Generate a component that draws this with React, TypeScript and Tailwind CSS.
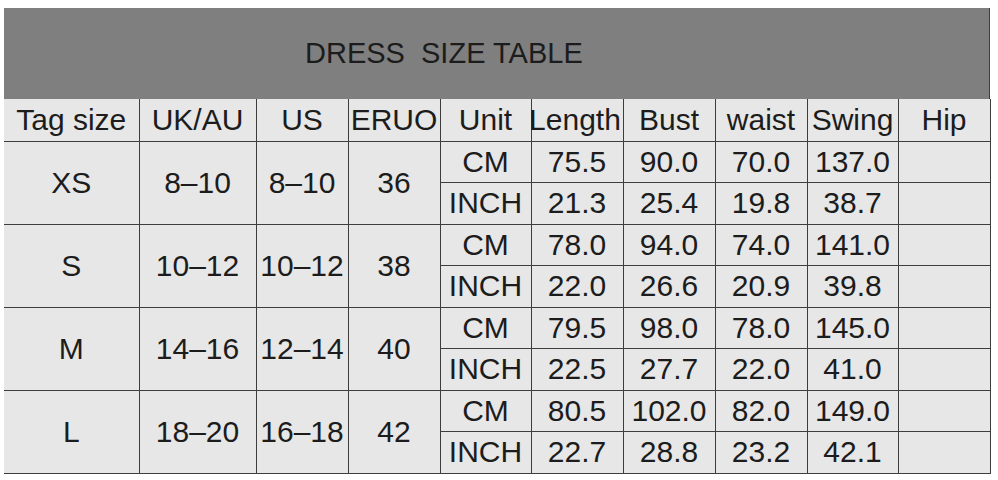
import { Fragment } from "react";

const rows = [
  { tag: "XS", uk: "8–10", us: "8–10", eu: "36", cm: ["75.5", "90.0", "70.0", "137.0"], inch: ["21.3", "25.4", "19.8", "38.7"] },
  { tag: "S", uk: "10–12", us: "10–12", eu: "38", cm: ["78.0", "94.0", "74.0", "141.0"], inch: ["22.0", "26.6", "20.9", "39.8"] },
  { tag: "M", uk: "14–16", us: "12–14", eu: "40", cm: ["79.5", "98.0", "78.0", "145.0"], inch: ["22.5", "27.7", "22.0", "41.0"] },
  { tag: "L", uk: "18–20", us: "16–18", eu: "42", cm: ["80.5", "102.0", "82.0", "149.0"], inch: ["22.7", "28.8", "23.2", "42.1"] },
];

const headers = ["Tag size", "UK/AU", "US", "ERUO", "Unit", "Length", "Bust", "waist", "Swing", "Hip"];
const widths = [135, 117, 92, 92, 91, 92, 92, 92, 91, 92];

const cell = "border border-[#3d3d3d] text-center align-middle p-0 whitespace-nowrap";

export default function App() {
  return (
    <div className="w-[998px] h-[480px] bg-white pt-[8px] pl-[4px] text-[#1c1c1c] font-['Liberation_Sans',Arial,sans-serif] overflow-hidden">
      <div className="w-[986px]">
        <div className="h-[91px] bg-[#7f7f7f] border-r border-[#3d3d3d] flex items-center pl-[301px]">
          <span className="text-[29px] whitespace-pre leading-none">DRESS  SIZE TABLE</span>
        </div>
        <table className="table-fixed border-collapse w-[986px] bg-[#e7e7e7] text-[30px] leading-none">
          <colgroup>
            {widths.map((w, i) => (
              <col key={i} style={{ width: w }} />
            ))}
          </colgroup>
          <thead>
            <tr className="h-[42px]">
              {headers.map((h, i) => (
                <td key={h} className={`${cell} border-t-0 ${i === 0 ? "border-l-0" : ""}`}>
                  <span className={i === 5 ? "-ml-[4px]" : ""}>{h}</span>
                </td>
              ))}
            </tr>
          </thead>
          <tbody>
            {rows.map((r) => (
              <Fragment key={r.tag}>
                <tr className="h-[41.5px]">
                  <td rowSpan={2} className={`${cell} border-l-0`}>{r.tag}</td>
                  <td rowSpan={2} className={cell}>{r.uk}</td>
                  <td rowSpan={2} className={cell}>{r.us}</td>
                  <td rowSpan={2} className={cell}>{r.eu}</td>
                  <td className={cell}>CM</td>
                  {r.cm.map((v, i) => (
                    <td key={i} className={cell}>{v}</td>
                  ))}
                  <td className={cell}></td>
                </tr>
                <tr className="h-[41.5px]">
                  <td className={cell}>INCH</td>
                  {r.inch.map((v, i) => (
                    <td key={i} className={cell}>{v}</td>
                  ))}
                  <td className={cell}></td>
                </tr>
              </Fragment>
            ))}
          </tbody>
        </table>
      </div>
    </div>
  );
}
